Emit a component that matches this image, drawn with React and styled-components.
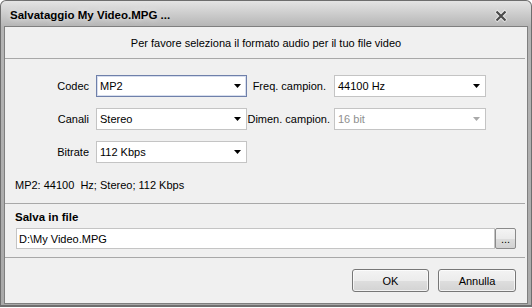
import styled, { createGlobalStyle } from 'styled-components'

// ===================================

const GlobalStyle = createGlobalStyle`
  html, body {
    margin: 0;
    padding: 0;
    background: #ffffff;
  }
  body {
    font-family: "Liberation Sans", Arial, sans-serif;
    font-size: 11px;
    color: #000000;
  }
`

const Window = styled.div`
  box-sizing: border-box;
  width: 532px;
  height: 307px;
  display: flex;
  flex-direction: column;
  border: 1px solid #6e6e6e;
  border-bottom-width: 2px;
  border-radius: 6px 6px 0 0;
  background: linear-gradient(#e4e4e4 0px, #b4b4b4 26px, #a9a9a9 100%);
  padding: 0 3px 1px;
`

const TitleBar = styled.div`
  height: 25px;
  flex-shrink: 0;
  display: flex;
  align-items: center;
  justify-content: space-between;
  padding: 0 20px 0 6px;
`

const TitleText = styled.span`
  font-weight: bold;
  font-size: 11.5px;
  color: #000000;
  padding-top: 3px;
  text-shadow: 0 0 6px rgba(255, 255, 255, 0.7);
`

const CloseIcon = styled.svg`
  width: 14px;
  height: 14px;
  margin-top: 4px;
`

const Client = styled.div`
  flex: 1;
  display: flex;
  flex-direction: column;
  background: #f0f0f0;
  border: 1px solid #7f7f7f;
`

const Header = styled.div`
  height: 31px;
  display: flex;
  align-items: center;
  justify-content: center;
`

const Separator = styled.div`
  height: 1px;
  margin-right: 2px;
  background: #a8a8a8;
  flex-shrink: 0;
`

const FormGrid = styled.div`
  display: grid;
  grid-template-columns: 91px 151px 87px 152px;
  grid-auto-rows: 22px;
  row-gap: 11px;
  padding-top: 16px;
`

const Label = styled.label`
  display: flex;
  align-items: center;
  justify-content: flex-end;
  white-space: nowrap;
  padding-right: ${(p) => p.$pad || 7}px;
`

const Combo = styled.div`
  box-sizing: border-box;
  display: flex;
  align-items: center;
  justify-content: space-between;
  background: #ffffff;
  border: 1px solid ${(p) => (p.$focused ? '#6f80aa' : '#c4c4c4')};
  box-shadow: ${(p) => (p.$focused ? 'inset 0 0 0 1px #d7deee' : 'none')};
  padding: 0 5px 0 3px;
  color: ${(p) => (p.$disabled ? '#8f8f8f' : '#000000')};
`

const ArrowIcon = styled.svg`
  width: 7px;
  height: 4px;
  fill: ${(p) => (p.$disabled ? '#a9a9a9' : '#000000')};
`

const Summary = styled.div`
  line-height: 14px;
  padding: 15px 0 11px 10px;
  white-space: pre;
`

const SaveSection = styled.div`
  display: flex;
  flex-direction: column;
  padding: 6px 11px 8px 10px;
`

const SectionTitle = styled.div`
  font-weight: bold;
  font-size: 11.5px;
  line-height: 14px;
  margin-bottom: 4px;
`

const FileRow = styled.div`
  display: flex;
  height: 21px;
  margin-left: 1px;
`

const FileInput = styled.div`
  box-sizing: border-box;
  flex: 1;
  display: flex;
  align-items: center;
  background: #ffffff;
  border: 1px solid #c4c4c4;
  padding-left: 2px;
`

const BrowseButton = styled.button`
  box-sizing: border-box;
  width: 21px;
  height: 21px;
  padding: 0 0 3px;
  font-family: inherit;
  font-size: 11px;
  color: #000000;
  border: 1px solid #8a8a8a;
  border-radius: 2px;
  background: linear-gradient(#f4f4f4 0%, #ebebeb 50%, #dddddd 51%, #d2d2d2 100%);
  display: flex;
  align-items: flex-end;
  justify-content: center;
`

const ButtonBar = styled.div`
  display: flex;
  justify-content: flex-end;
  gap: 9px;
  padding: 11px 11px 0 0;
`

const DialogButton = styled.button`
  box-sizing: border-box;
  width: ${(p) => p.$width}px;
  height: 23px;
  font-family: inherit;
  font-size: 11px;
  color: #000000;
  border: 1px solid #777777;
  border-radius: 3px;
  background: linear-gradient(#f3f3f3 0%, #ececec 50%, #dedede 51%, #d3d3d3 100%);
  box-shadow: inset 0 0 0 1px rgba(255, 255, 255, 0.7);
`

// ===================================

const Arrow = ({ disabled }) => (
  <ArrowIcon viewBox="0 0 7 4" $disabled={disabled}>
    <polygon points="0,0 7,0 3.5,4" />
  </ArrowIcon>
)

const ComboBox = ({ value, focused, disabled }) => (
  <Combo $focused={focused} $disabled={disabled}>
    <span>{value}</span>
    <Arrow disabled={disabled} />
  </Combo>
)

const App = () => {
  return (
    <>
      <GlobalStyle />
      <Window>
        <TitleBar>
          <TitleText>Salvataggio My Video.MPG ...</TitleText>
          <CloseIcon viewBox="0 0 14 14">
            <path d="M2 2 L12 12 M12 2 L2 12" stroke="#ffffff" strokeOpacity="0.6" strokeWidth="4" />
            <path d="M2.5 2.5 L11.5 11.5 M11.5 2.5 L2.5 11.5" stroke="#4a4a4a" strokeWidth="2.2" />
          </CloseIcon>
        </TitleBar>
        <Client>
          <Header>Per favore seleziona il formato audio per il tuo file video</Header>
          <Separator />
          <FormGrid>
            <Label>Codec</Label>
            <ComboBox value="MP2" focused />
            <Label $pad={8}>Freq. campion.</Label>
            <ComboBox value="44100 Hz" />

            <Label>Canali</Label>
            <ComboBox value="Stereo" />
            <Label $pad={4}>Dimen. campion.</Label>
            <ComboBox value="16 bit" disabled />

            <Label>Bitrate</Label>
            <ComboBox value="112 Kbps" />
          </FormGrid>
          <Summary>MP2: 44100  Hz; Stereo; 112 Kbps</Summary>
          <Separator />
          <SaveSection>
            <SectionTitle>Salva in file</SectionTitle>
            <FileRow>
              <FileInput>D:\My Video.MPG</FileInput>
              <BrowseButton>...</BrowseButton>
            </FileRow>
          </SaveSection>
          <Separator />
          <ButtonBar>
            <DialogButton $width={77}>OK</DialogButton>
            <DialogButton $width={78}>Annulla</DialogButton>
          </ButtonBar>
        </Client>
      </Window>
    </>
  )
}

export default App
